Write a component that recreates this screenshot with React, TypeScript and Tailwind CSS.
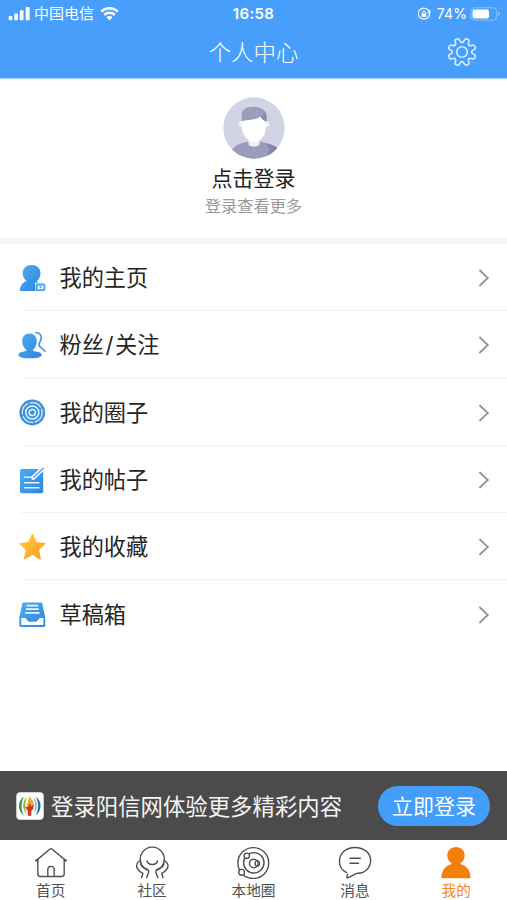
import React from "react";

const FONT = "font-['Inter','Noto_Sans_CJK_SC',sans-serif]";

// Eight-toothed outline with corners rounded through the edge midpoints.
function gearPath(cx: number, cy: number) {
  const pts: [number, number][] = [];
  const profile: [number, number][] = [
    [-10.5, 14.2],
    [10.5, 14.2],
    [13, 9.8],
    [32, 9.8],
  ];
  for (let i = 0; i < 8; i++) {
    const base = 22.5 + i * 45;
    profile.forEach(([off, r]) => {
      const a = ((base + off) * Math.PI) / 180;
      pts.push([cx + r * Math.cos(a), cy + r * Math.sin(a)]);
    });
  }
  const mid = (i: number) => {
    const p = pts[i % pts.length];
    const q = pts[(i + 1) % pts.length];
    return `${((p[0] + q[0]) / 2).toFixed(2)} ${((p[1] + q[1]) / 2).toFixed(2)}`;
  };
  let d = `M${mid(0)}`;
  for (let i = 1; i <= pts.length; i++) {
    const p = pts[i % pts.length];
    d += `Q${p[0].toFixed(2)} ${p[1].toFixed(2)} ${mid(i)}`;
  }
  return `${d}Z`;
}

const Blue = ({ id }: { id: string }) => (
  <defs>
    <linearGradient id={id} x1="0" y1="0" x2="1" y2="1">
      <stop offset="0" stopColor="#4fabee" />
      <stop offset="1" stopColor="#2c86e4" />
    </linearGradient>
  </defs>
);

const HomePageIcon = () => (
  <svg width="28" height="28" viewBox="0 0 28 28">
    <Blue id="g1" />
    <path
      fill="url(#g1)"
      d="M13.7 1C19 1 22.5 4.4 22.5 9.2c0 3.3-1.5 6-3.6 7.8l1.6 1.6h-3.2V27H1.8c.2-5 2.600-8.400 6.700-10C6.300 15.200 4.700 12.500 4.700 9.200 4.700 4.400 8.400 1 13.700 1Z"
    />
    <rect x="18.700" y="20.500" width="7.700" height="5.700" rx=".6" fill="#fff" stroke="#46a0ea" strokeWidth="1.800" />
    <path d="M20.800 22.200h3.600l-1.800 2.300Z" fill="#46a0ea" />
  </svg>
);

const FansIcon = () => (
  <svg width="28" height="28" viewBox="0 0 28 28">
    <Blue id="g2" />
    <path
      fill="url(#g2)"
      d="M11.500 2.400c4.600 0 7.300 3.200 7.300 7.600 0 4.100-1.700 7.200-4 8.900.3 1 1.400 1.400 3.300 1.700 3.600.5 5.600 1.700 5.600 3.300 0 2.200-4.800 3.400-11.700 3.400S.4 26.100.4 23.900c0-1.700 2-2.800 5-3.300 1.800-.3 2.800-.7 3-1.700C6 17.200 4.200 14.100 4.200 10c0-4.400 2.700-7.600 7.300-7.600Z"
    />
    <path d="M18 1.600c3.600.1 5.400 2.400 5.200 5.500-.1 2.900-2.400 4.600-2.200 6.700.2 2.600 4.200 3.700 6 6.400" fill="none" stroke="#4198e7" strokeWidth="1.700" strokeLinecap="round" />
  </svg>
);

const CircleIcon = () => (
  <svg width="28" height="28" viewBox="0 0 28 28">
    <circle cx="14.300" cy="14.500" r="12.900" fill="#3d91da" />
    <g fill="none" stroke="#e4f3fd">
      <circle cx="14.300" cy="14.500" r="9.900" strokeWidth="1.200" strokeDasharray="13 1.500" />
      <circle cx="14.300" cy="14.500" r="6.500" strokeWidth="1.500" />
      <circle cx="14.300" cy="14.500" r="3.100" strokeWidth="1.500" />
    </g>
  </svg>
);

const PostIcon = () => (
  <svg width="28" height="28" viewBox="0 0 28 28">
    <Blue id="g4" />
    <rect x="2" y="3" width="23.200" height="24.300" rx="2" fill="url(#g4)" />
    <path d="M6.500 11.300h7M6.500 16.700h14.500M6.500 21.700h14.500" stroke="#e3f2ff" strokeWidth="1.400" strokeLinecap="round" />
    <path d="M15.200 11.600 25.300 2.200" stroke="#fff" strokeWidth="4.400" strokeLinecap="round" />
    <path d="m15.800 11.100 9.400-8.700" stroke="#62afe9" strokeWidth="1.700" strokeLinecap="round" />
  </svg>
);

const StarIcon = () => (
  <svg width="28" height="28" viewBox="0 0 28 28">
    <defs>
      <linearGradient id="g5" x1="0" y1="0" x2="1" y2="1">
        <stop offset="0" stopColor="#ffce48" />
        <stop offset="1" stopColor="#fb9c1d" />
      </linearGradient>
    </defs>
    <path
      fill="url(#g5)"
      stroke="url(#g5)"
      strokeWidth="1.200"
      strokeLinejoin="round"
      d="m14.400 1.600 3.800 8 8.600 1-6.400 6.100 1.900 9.200-7.900-4.600-7.900 4.600 1.900-9.200L2 10.600l8.600-1Z"
    />
  </svg>
);

const DraftIcon = () => (
  <svg width="28" height="28" viewBox="0 0 28 28">
    <Blue id="g6" />
    <path fill="url(#g6)" d="M5.700 2.400h17.200q1 0 1.300 1L27.200 17v8.200q0 1.700-1.700 1.700H3q-1.700 0-1.700-1.700V17L4.400 3.400q.3-1 1.300-1Z" />
    <path d="M8.700 5.600h11.400M8 9.200h12.800M7.200 12.800h14.400" stroke="#e9f6ff" strokeWidth="1.700" />
    <path fill="#fff" d="M3.300 18h3.900l3.500 3.700h7.600l3.500-3.700h3.600v6.900H3.300Z" />
  </svg>
);

const rows = [
  { label: "我的主页", Icon: HomePageIcon },
  { label: "粉丝/关注", Icon: FansIcon },
  { label: "我的圈子", Icon: CircleIcon },
  { label: "我的帖子", Icon: PostIcon },
  { label: "我的收藏", Icon: StarIcon },
  { label: "草稿箱", Icon: DraftIcon },
];

const HouseTab = () => (
  <svg width="34" height="34" viewBox="0 0 34 34" fill="none" stroke="#505050" strokeWidth="1.400" strokeLinecap="round" strokeLinejoin="round">
    <path d="M2.400 14.400 16.400 2.800q.6-.4 1.200 0l14 11.600M3.800 13.500v14.600q0 2.400 2.400 2.400h21.600q2.400 0 2.400-2.400V13.500M13.800 30.300v-6.700q0-3.200 3.200-3.200t3.200 3.200v6.700" />
    <path d="M2 14.600h1.400M30.600 14.600h1.400" strokeWidth="2" />
  </svg>
);

const CommunityTab = () => (
  <svg width="34" height="34" viewBox="0 0 34 34" fill="none" stroke="#505050" strokeWidth="1.400" strokeLinecap="round" strokeLinejoin="round">
    <path d="M12.200 24A12 12 0 1 1 22.400 24" />
    <path d="M12.100 15c1.100 4.600 9.300 4.600 10.400 0" />
    <path d="M5.300 14.600C1.600 16.200.8 19.600 2.500 22.700c1.200 2.300 3 3.600 5.400 4.700L6.600 31.500M5.600 17.600c.5 3.100 2.600 4.100 4.800 4.900 3.100 1.100 3.900 2.500 2.900 4.900l-1.600 4.100" />
    <path d="M29.300 14.600c3.700 1.600 4.500 5 2.800 8.100-1.200 2.300-3 3.600-5.400 4.700l1.300 4.100M29 17.600c-.5 3.100-2.600 4.100-4.800 4.900-3.100 1.100-3.900 2.500-2.900 4.900l1.600 4.100" />
  </svg>
);

const LocalTab = () => (
  <svg width="34" height="34" viewBox="0 0 34 34" fill="none" stroke="#505050" strokeWidth="1.400">
    <circle cx="17.300" cy="17" r="15.400" />
    <circle cx="17.800" cy="16.800" r="10.200" />
    <circle cx="17.800" cy="17.500" r="4.300" />
    <path d="M20.200 14.900a2.700 2.700 0 1 1 0 5.200c-1.300-1.500-1.300-3.700 0-5.200Z" />
    <circle cx="10.800" cy="9.800" r="2.700" fill="#fff" />
    <circle cx="5.600" cy="26.300" r="2.900" fill="#fff" />
  </svg>
);

const MessageTab = () => (
  <svg width="34" height="34" viewBox="0 0 34 34" fill="none" stroke="#505050" strokeWidth="1.400" strokeLinecap="round" strokeLinejoin="round">
    <path d="M8.600 26.700C4.200 24.500 1.400 20.300 1.400 15.300 1.400 7 8.200 1.500 17 1.500s15.600 5.400 15.600 13.100C32.600 22.300 26.800 27 19.800 27.300c-4.500.2-6 3.900-10.300 4.500q-1.200 0-.6-1.200l.8-2.200" />
    <path d="M12 12.300h10.300M12 17.300h8.500" strokeWidth="1.500" />
  </svg>
);

const MineTab = () => (
  <svg width="34" height="34" viewBox="0 0 34 34" fill="#f57f0b">
    <path d="M17 .900c5.200 0 8.700 3.600 8.700 8.500 0 3.300-1.700 6.100-4.100 7.700-.4.800.1 1.200.9 1.500 5.300 1.600 8.900 5.900 9.100 13.600H2.400c.2-7.700 3.800-12 9.100-13.600.8-.3 1.300-.7.9-1.500-2.400-1.600-4.100-4.400-4.100-7.700 0-4.900 3.500-8.500 8.700-8.500Z" />
  </svg>
);

const tabs = [
  { label: "首页", Icon: HouseTab, active: false },
  { label: "社区", Icon: CommunityTab, active: false },
  { label: "本地圈", Icon: LocalTab, active: false },
  { label: "消息", Icon: MessageTab, active: false },
  { label: "我的", Icon: MineTab, active: true },
];

const StatusBar = () => (
  <div className="grid h-[27px] grid-cols-3 items-center text-white">
    <div className="flex items-center pl-2">
      <svg width="23" height="15" viewBox="0 0 23 15" fill="#fff">
        <rect x=".6" y="10" width="3.700" height="4.300" rx="1" />
        <rect x="6.200" y="7.500" width="3.700" height="6.800" rx="1" />
        <rect x="11.800" y="4.300" width="3.700" height="10" rx="1" />
        <rect x="17.700" y="1" width="3.900" height="13.300" rx="1" />
      </svg>
      <span className="ml-[3px] pt-px text-[15px] leading-5">中国电信</span>
      <svg className="ml-[6px]" width="19" height="15" viewBox="0 0 19 15">
        <path d="M1.200 5.600a12 12 0 0 1 16.600 0M4.200 8.800a7.700 7.700 0 0 1 10.600 0" fill="none" stroke="#fff" strokeWidth="2.400" />
        <path d="m9.500 14.500-3-3.200a4.200 4.200 0 0 1 6 0Z" fill="#fff" />
      </svg>
    </div>
    <span className="text-center text-[15px] font-semibold leading-5 tracking-[0.3px]">16:58</span>
    <div className="flex items-center justify-end pr-[6px]">
      <svg width="14" height="14" viewBox="0 0 14 14" fill="none" stroke="#fff">
        <path d="M3 2.700a5.600 5.600 0 1 0 8 0" strokeWidth="1.200" />
        <path d="M3 2.700a5.600 5.600 0 0 1 8.800 1.400M12.900 3.200v2.400h-2.400" strokeWidth="1.200" />
        <rect x="4.600" y="6.300" width="4.800" height="3.700" rx=".6" fill="#fff" stroke="none" />
        <path d="M5.600 6.500V5.300a1.400 1.400 0 0 1 2.800 0v1.200" strokeWidth="1" />
      </svg>
      <span className="ml-[6px] text-[14px] leading-5 tracking-[0.1px]">74%</span>
      <svg className="ml-[3px]" width="31" height="14" viewBox="0 0 31 14">
        <rect x=".8" y=".8" width="25.800" height="12.400" rx="3.500" fill="none" stroke="#86c0fc" strokeWidth="1" />
        <rect x="2.500" y="2.500" width="16.500" height="9" rx="2" fill="#fff" />
        <path d="M28 4.800q1.800.6 1.800 2.200T28 9.200Z" fill="#86c0fc" />
      </svg>
    </div>
  </div>
);

const Avatar = () => (
  <svg width="62" height="62" viewBox="0 0 62 62">
    <defs>
      <clipPath id="avatar">
        <circle cx="31" cy="31" r="30.700" />
      </clipPath>
    </defs>
    <g clipPath="url(#avatar)">
      <rect width="62" height="62" fill="#d2d3e5" />
      <path d="M8 54c3-5 9-7.500 16-9.200h14C45 46.500 51 49 54 54v9H8Z" fill="#9a9bbd" />
      <path d="m42 46 5 6-5 10h14V52c-4-3.500-9-5-14-6Z" fill="#8485ab" />
      <path d="M25.500 40h11v8q-5.500 3.500-11 0Z" fill="#eeeef7" />
      <circle cx="18.500" cy="27" r="3" fill="#f1f1fa" />
      <circle cx="43.500" cy="27" r="3" fill="#f1f1fa" />
      <path d="M19 19h24v11.500c0 7.500-6.500 15-12 15s-12-7.500-12-15Z" fill="#fff" />
      <path d="M18.700 24V17.500c0-4.700 4.400-7.700 11.500-7.700 8.500 0 13.300 3.700 13.300 9.700V24.500c-2.500-.5-4.600-2.500-6.200-5-5 4-13 3-18.600 4.500Z" fill="#9c9dbd" />
      <path d="M37.300 19.500c2.300-1 4-3.300 4.500-5.500 2 3 2 6.500 1.700 10.500-2.500-.5-4.600-2.500-6.200-5Z" fill="#8a8bae" />
    </g>
  </svg>
);

const SiteLogo = () => (
  <svg className="shrink-0" width="28" height="28" viewBox="0 0 28 28">
    <rect x=".3" y=".3" width="27.400" height="27.400" rx="4" fill="#fff" />
    <path d="M8 4.800C1.200 9 1.400 18.800 8 23.500 4.700 17.800 4.800 10.200 8 4.800Z" fill="#399346" />
    <path d="M11.300 4.500C5.800 9 6 17.600 10.800 22 8.500 16.400 8.700 10 11.300 4.500Z" fill="#8eb93b" />
    <path d="M19.600 4.800c6.800 4.200 6.600 14 0 18.700 3.300-5.700 3.200-13.300 0-18.700Z" fill="#2875ae" />
    <path d="M17.200 5c4.500 4 5 11.600 1.200 16 1.200-5 1.100-10.500-1.200-16Z" fill="#94bad9" />
    <path d="M14 3.800c-.3 3 3.400 4.200 3.700 7.700q0 2-1.200 3.500h-4.700L10 11.500l2.200.5C11.500 9 12.500 6 14 3.800Z" fill="#f3a923" />
    <path d="M8.800 14.500 12 15l1.800-4.300 1.200 4.100 3-2.300-.9 4.500-1.800 2v4.700h-3.500V19Z" fill="#d83120" />
  </svg>
);

export default function App() {
  return (
    <div className={`flex h-[900px] w-full flex-col overflow-hidden bg-white ${FONT}`}>
      <header className="h-[79px] shrink-0 border-b border-[#9fcfff] bg-[#479ffb]">
        <StatusBar />
        <div className="grid h-[51px] grid-cols-[1fr_auto_1fr] items-center">
          <span />
          <h1 className="text-[22.400px] font-light leading-8 text-white">个人中心</h1>
          <svg className="mb-[2px] mr-[30px] justify-self-end" width="30" height="30" viewBox="0 0 30 30" fill="none" stroke="#dceeff" strokeWidth="1.600" strokeLinejoin="round">
            <path d={gearPath(15, 15)} />
            <circle cx="15" cy="15" r="5.300" />
          </svg>
        </div>
      </header>

      <section className="flex h-[158px] shrink-0 flex-col items-center pt-[18px]">
        <Avatar />
        <div className="mt-[5px] text-[21px] leading-[30px] text-[#222]">点击登录</div>
        <div className="text-[16.200px] leading-6 text-[#999]">登录查看更多</div>
      </section>
      <div className="h-[7px] shrink-0 bg-[#f7f7f7]" />

      <nav className="flex-1">
        {rows.map(({ label, Icon }) => (
          <div key={label} className="group flex h-[67.300px] items-center pl-[18px]">
            <Icon />
            <div className="-ml-[26px] flex h-full flex-1 items-center border-b border-[#f3f3f3] pl-[39.500px] pt-[2px] group-last:border-transparent">
              <span className="flex-1 text-[22.200px] leading-8 text-[#252525]">
                {label.split("/").map((part, i) => (
                  <React.Fragment key={part}>
                    {i > 0 && <span className="mx-[1.600px]">/</span>}
                    {part}
                  </React.Fragment>
                ))}
              </span>
              <svg className="mr-[16px]" width="14" height="20" viewBox="0 0 14 20" fill="none" stroke="#929292" strokeWidth="1.800">
                <path d="m2.400 2 8.400 8-8.400 8" />
              </svg>
            </div>
          </div>
        ))}
      </nav>

      <aside className="flex h-[69px] shrink-0 items-center bg-[#4b4b4b] pl-4 pr-[17px]">
        <SiteLogo />
        <span className="ml-[7px] flex-1 whitespace-nowrap pt-[2px] text-[22.400px] leading-8 text-[#f4f4f4]">登录阳信网体验更多精彩内容</span>
        <button className="h-[40px] w-[112px] rounded-full bg-[#439efb] pt-[2px] text-[21px] leading-8 text-white">立即登录</button>
      </aside>

      <footer className="grid h-[60px] shrink-0 grid-cols-5">
        {tabs.map(({ label, Icon, active }) => (
          <div key={label} className="flex flex-col items-center pt-[6px]">
            <Icon />
            <span className={`mt-px text-[14.700px] leading-5 ${active ? "text-[#f28a2c]" : "text-[#505050]"}`}>{label}</span>
          </div>
        ))}
      </footer>
    </div>
  );
}
